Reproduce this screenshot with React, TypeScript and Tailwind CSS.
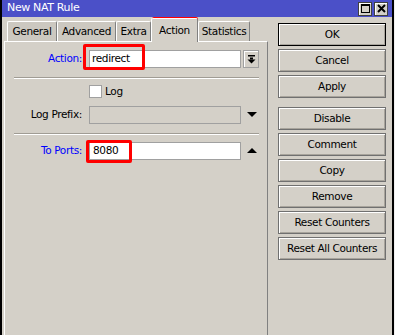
import React from 'react';

const buttonsTop = ['OK', 'Cancel', 'Apply'];
const buttonsBottom = ['Disable', 'Comment', 'Copy', 'Remove', 'Reset Counters', 'Reset All Counters'];

const tabs = [
  { label: 'General', w: 'w-[50px]' },
  { label: 'Advanced', w: 'w-[59px]' },
  { label: 'Extra', w: 'w-[35px]' },
  { label: 'Action', w: 'w-[47px]', active: true },
  { label: 'Statistics', w: 'w-[52px]' },
];

function WinButton({ label, primary }: { label: string; primary?: boolean }) {
  return (
    <button
      className={
        'flex h-[23px] w-[108px] items-center justify-center border bg-[#d4d0c8] shadow-[inset_1px_1px_0_#ffffff,inset_-1px_-1px_0_#a8a49c] ' +
        (primary ? 'border-black' : 'border-[#707070]')
      }
    >
      {label}
    </button>
  );
}

function DropIcon() {
  return (
    <svg width="9" height="10" viewBox="0 0 9 10">
      <rect x="1" y="1" width="7" height="1.5" fill="#000" />
      <rect x="3" y="3.5" width="3" height="2" fill="#000" />
      <polygon points="0.5,5.5 8.5,5.5 4.5,9.5" fill="#000" />
    </svg>
  );
}

function Triangle({ up }: { up?: boolean }) {
  return (
    <svg width="10" height="6" viewBox="0 0 10 6" className="ml-[6px]">
      <polygon points={up ? '0,5 10,5 5,0' : '0,0 10,0 5,5'} fill="#000" />
    </svg>
  );
}

function Separator() {
  return <div className="ml-[9px] mr-[8px] h-[2px] border-t border-b border-t-[#a09c94] border-b-white" />;
}

export default function App() {
  return (
    <div className="relative h-[335px] w-[395px] overflow-hidden bg-[#f0f0f0] font-['DejaVu_Sans',Verdana,sans-serif] text-[10.5px] tracking-[-0.35px] text-black">
      <div className="flex h-full w-[394px] flex-col border-x-2 border-black bg-[#d4d0c8]">
        {/* Title bar */}
        <div className="flex h-[17px] items-center bg-[#4b50c8] pl-[5px] pr-[4px] text-white">
          <span className="flex-1 text-[11px]">New NAT Rule</span>
          <div className="flex gap-[2px]">
            <div className="flex h-[14px] w-[14px] items-center justify-center border border-[#404040] bg-[#d4d0c8] shadow-[inset_1px_1px_0_#fff]">
              <div className="h-[9px] w-[9px] border border-t-2 border-black" />
            </div>
            <div className="flex h-[14px] w-[14px] items-center justify-center border border-[#404040] bg-[#d4d0c8] shadow-[inset_1px_1px_0_#fff]">
              <svg width="9" height="9" viewBox="0 0 9 9">
                <path d="M1 1 L8 8 M8 1 L1 8" stroke="#000" strokeWidth="2" />
              </svg>
            </div>
          </div>
        </div>

        <div className="flex flex-1">
          {/* Tabs and panel */}
          <div className="flex w-[266px] flex-col pl-[2px]">
            <div className="flex h-[24px] items-end pl-[3px]">
              {tabs.map((t) => (
                <div
                  key={t.label}
                  className={
                    'flex items-center justify-center rounded-t-[2px] border-l border-r border-t border-l-white border-r-[#808080] border-t-white ' +
                    t.w +
                    (t.active ? ' relative z-10 -mb-px h-[24px] bg-[#d4d0c8]' : ' h-[20px] bg-[#ccc8c0]')
                  }
                >
                  {t.label}
                </div>
              ))}
            </div>

            <div className="flex-1 border-l border-r border-t border-l-white border-r-[#808080] border-t-white pt-[8px]">
              {/* Action */}
              <div className="flex h-[18px] items-center">
                <span className="w-[77px] text-right text-[#0000ff]">Action:</span>
                <div className="ml-[7px] flex h-[18px] w-[152px] items-center border border-[#a0a0a0] bg-white pl-[2px]">
                  redirect
                </div>
                <div className="ml-[2px] flex h-[18px] w-[16px] items-center justify-center border border-[#a0a0a0] bg-[#d4d0c8] shadow-[inset_1px_1px_0_#fff]">
                  <DropIcon />
                </div>
              </div>

              <div className="mt-[9px]">
                <Separator />
              </div>

              {/* Log */}
              <div className="mt-[6px] flex h-[13px] items-center">
                <div className="ml-[84px] h-[13px] w-[13px] border border-[#a0a0a0] bg-white" />
                <span className="ml-[3px]">Log</span>
              </div>

              {/* Log prefix */}
              <div className="mt-[8px] flex h-[18px] items-center">
                <span className="w-[77px] text-right">Log Prefix:</span>
                <div className="ml-[7px] h-[18px] w-[152px] border border-[#a0a0a0] bg-[#d4d0c8]" />
                <Triangle />
              </div>

              <div className="mt-[9px]">
                <Separator />
              </div>

              {/* To Ports */}
              <div className="mt-[7px] flex h-[18px] items-center">
                <span className="w-[77px] text-right text-[#0000ff]">To Ports:</span>
                <div className="ml-[7px] flex h-[18px] w-[152px] items-center border border-[#a0a0a0] bg-white pl-[3px]">
                  8080
                </div>
                <Triangle up />
              </div>
            </div>
          </div>

          {/* Buttons */}
          <div className="flex flex-col pl-[10px] pt-[6px]">
            <div className="flex flex-col gap-[3px]">
              {buttonsTop.map((b) => (
                <WinButton key={b} label={b} primary={b === 'OK'} />
              ))}
            </div>
            <div className="mt-[9px] flex flex-col gap-[3px]">
              {buttonsBottom.map((b) => (
                <WinButton key={b} label={b} />
              ))}
            </div>
          </div>
        </div>
      </div>

      {/* Red annotation boxes */}
      <div className="absolute left-[152px] top-[17px] h-[23px] w-[46px] rounded-[2px] border-[3px] border-[#ff0000]" />
      <div className="absolute left-[83px] top-[44px] h-[26px] w-[62px] rounded-[2px] border-[3px] border-[#ff0000]" />
      <div className="absolute left-[86px] top-[140px] h-[23px] w-[46px] rounded-[2px] border-[3px] border-[#ff0000]" />
    </div>
  );
}
